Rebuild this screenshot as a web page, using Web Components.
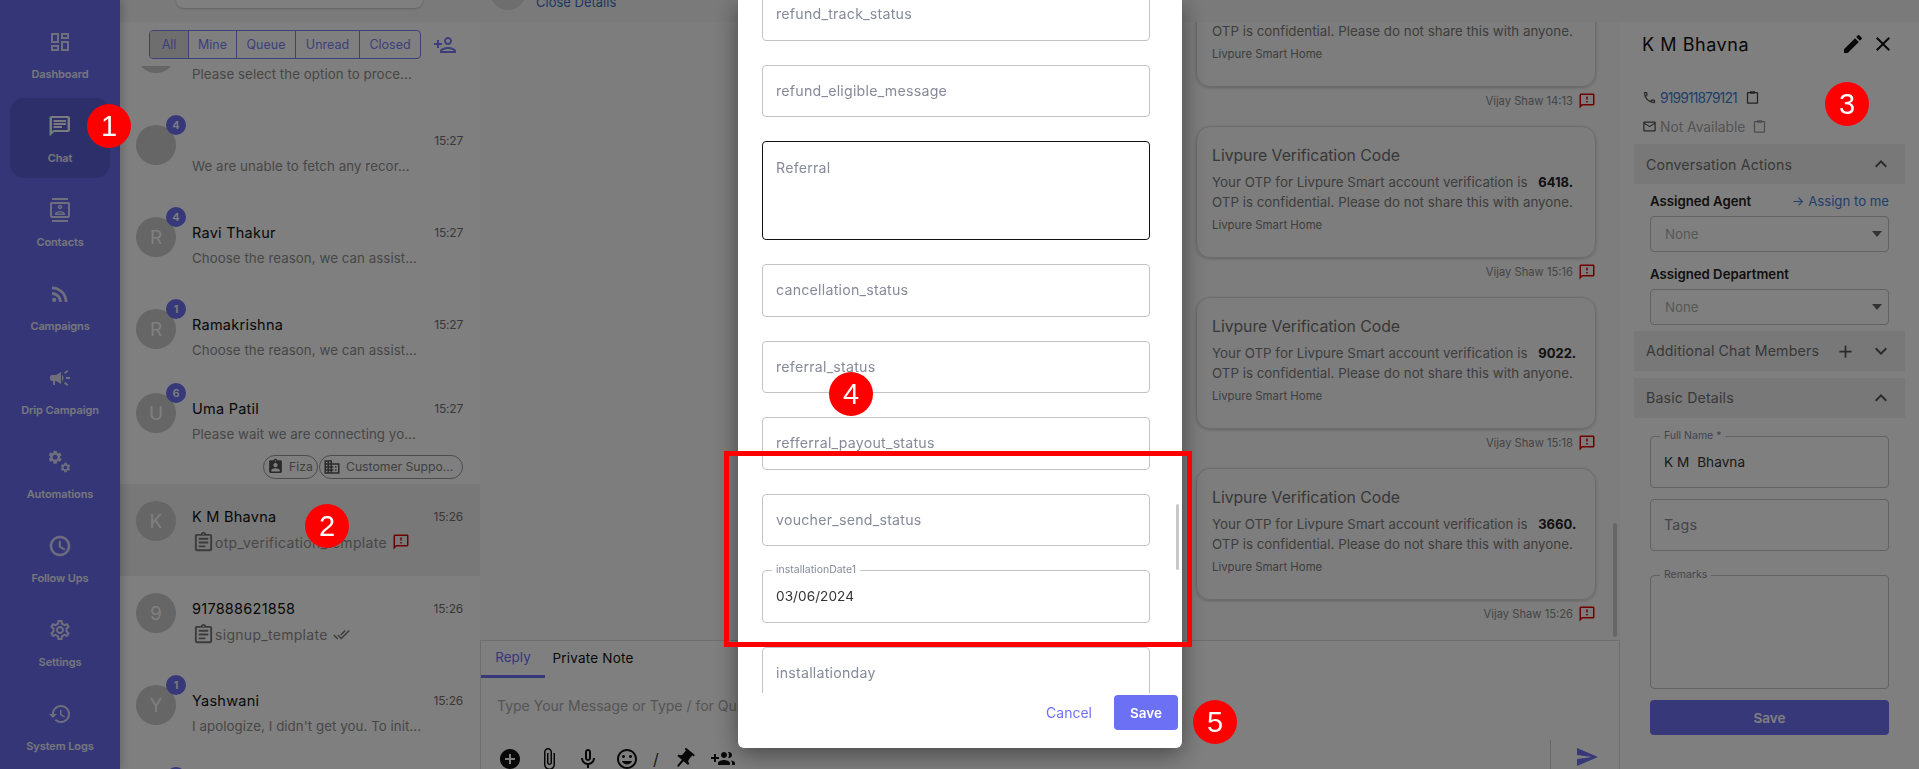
<!DOCTYPE html>
<html lang="en">
<head>
<meta charset="utf-8">
<title>Chat</title>
<style>
    html, body { margin: 0; height: 100%; overflow: hidden; background: #fff; }
    body { font-family: "Inter", "Noto Sans", sans-serif; color: #111; }
</style>
</head>
<body>
<app-shell>
    <side-nav slot="nav">
        <nav-item icon="dashboard">Dashboard</nav-item>
        <nav-item icon="chat" active>Chat</nav-item>
        <nav-item icon="contacts">Contacts</nav-item>
        <nav-item icon="rss">Campaigns</nav-item>
        <nav-item icon="campaign">Drip Campaign</nav-item>
        <nav-item icon="gears">Automations</nav-item>
        <nav-item icon="clock">Follow Ups</nav-item>
        <nav-item icon="settings">Settings</nav-item>
        <nav-item icon="history">System Logs</nav-item>
    </side-nav>

    <chat-list slot="list">
        <chat-row sub="Please select the option to proce..."></chat-row>
        <chat-row badge="4" time="15:27" sub="We are unable to fetch any recor..."></chat-row>
        <chat-row letter="R" badge="4" name="Ravi Thakur" time="15:27" sub="Choose the reason, we can assist..."></chat-row>
        <chat-row letter="R" badge="1" name="Ramakrishna" time="15:27" sub="Choose the reason, we can assist..." short></chat-row>
        <chat-row letter="U" badge="6" name="Uma Patil" time="15:27" sub="Please wait we are connecting yo..." chips></chat-row>
        <chat-row letter="K" name="K M Bhavna" time="15:26" sub="otp_verification_template" template="failed" selected></chat-row>
        <chat-row letter="9" name="917888621858" time="15:26" sub="signup_template" template="read"></chat-row>
        <chat-row letter="Y" badge="1" name="Yashwani" time="15:26" sub="I apologize, I didn't get you. To init..."></chat-row>
        <chat-row badge="2"></chat-row>
    </chat-list>

    <chat-thread slot="thread">
        <otp-card code="1204" meta="Vijay Shaw 14:13"></otp-card>
        <otp-card code="6418" meta="Vijay Shaw 15:16"></otp-card>
        <otp-card code="9022" meta="Vijay Shaw 15:18"></otp-card>
        <otp-card code="3660" meta="Vijay Shaw 15:26"></otp-card>
    </chat-thread>

    <contact-panel slot="panel"></contact-panel>
</app-shell>

<field-modal>
    <form-field placeholder="refund_track_status"></form-field>
    <form-field placeholder="refund_eligible_message"></form-field>
    <form-field placeholder="Referral" area></form-field>
    <form-field placeholder="cancellation_status"></form-field>
    <form-field placeholder="referral_status"></form-field>
    <form-field placeholder="refferral_payout_status"></form-field>
    <form-field placeholder="voucher_send_status"></form-field>
    <form-field label="installationDate1" value="03/06/2024"></form-field>
    <form-field placeholder="installationday"></form-field>
</field-modal>

<red-box></red-box>
<call-out n="1" style="--x:109px;--y:126px"></call-out>
<call-out n="2" style="--x:327px;--y:526px"></call-out>
<call-out n="3" style="--x:1847px;--y:104px"></call-out>
<call-out n="4" style="--x:851px;--y:394px"></call-out>
<call-out n="5" style="--x:1215px;--y:722px"></call-out>

<script>
const ICONS = {
    dashboard: 'M19 5v2h-4V5h4M9 5v6H5V5h4m10 8v6h-4v-6h4M9 17v2H5v-2h4M21 3h-8v6h8V3zM11 3H3v10h8V3zm10 8h-8v10h8V11zm-10 4H3v6h8v-6z',
    chat: 'M20 2H4c-1.1 0-2 .9-2 2v18l4-4h14c1.1 0 2-.9 2-2V4c0-1.1-.9-2-2-2zm0 14H6l-2 2V4h16v12zM6 12h8v2H6zM6 9h12v2H6zM6 6h12v2H6z',
    contacts: 'M20 0H4v2h16V0zM4 24h16v-2H4v2zM20 4H4c-1.1 0-2 .9-2 2v12c0 1.1.9 2 2 2h16c1.1 0 2-.9 2-2V6c0-1.1-.9-2-2-2zm0 14H4V6h16v12zm-8-6.75c1.24 0 2.25-1.01 2.25-2.25S13.24 6.75 12 6.75 9.75 7.76 9.75 9s1.01 2.25 2.25 2.25zm0-3c.41 0 .75.34.75.75s-.34.75-.75.75-.75-.34-.75-.75.34-.75.75-.75zM17 15.99C17 13.9 13.69 13 12 13s-5 .9-5 2.99V17h10v-1.01zm-8.19-.49c.61-.52 2.03-1 3.19-1 1.17 0 2.59.48 3.2 1H8.81z',
    rss: 'M4 4.44v2.83c7.03 0 12.73 5.7 12.73 12.73h2.83c0-8.59-6.97-15.56-15.56-15.56zm0 5.66v2.83c3.9 0 7.07 3.17 7.07 7.07h2.83c0-5.47-4.43-9.9-9.9-9.9zM6.18 15.64a2.18 2.18 0 1 0 0 4.36 2.18 2.18 0 0 0 0-4.36z',
    campaign: 'M18 11v2h4v-2h-4zm-2 6.61c.96.71 2.21 1.65 3.2 2.39.4-.53.8-1.07 1.2-1.6-.99-.74-2.24-1.68-3.2-2.4-.4.54-.8 1.08-1.2 1.61zM20.4 5.6c-.4-.53-.8-1.07-1.2-1.6-.99.74-2.24 1.68-3.2 2.4.4.53.8 1.07 1.2 1.6.96-.72 2.21-1.65 3.2-2.4zM4 9c-1.1 0-2 .9-2 2v2c0 1.1.9 2 2 2h1v4h2v-4h1l5 3V6L8 9H4zm11.5 3c0-1.33-.58-2.53-1.5-3.35v6.69c.92-.81 1.5-2.01 1.5-3.34z',
    settings: 'M19.43 12.98c.04-.32.07-.64.07-.98 0-.34-.03-.66-.07-.98l2.11-1.65c.19-.15.24-.42.12-.64l-2-3.46c-.09-.16-.26-.25-.44-.25-.06 0-.12.01-.17.03l-2.49 1c-.52-.4-1.08-.73-1.69-.98l-.38-2.65C14.46 2.18 14.25 2 14 2h-4c-.25 0-.46.18-.49.42l-.38 2.65c-.61.25-1.17.59-1.69.98l-2.49-1c-.06-.02-.12-.03-.18-.03-.17 0-.34.09-.43.25l-2 3.46c-.13.22-.07.49.12.64l2.11 1.65c-.04.32-.07.65-.07.98 0 .33.03.66.07.98l-2.11 1.65c-.19.15-.24.42-.12.64l2 3.46c.09.16.26.25.44.25.06 0 .12-.01.17-.03l2.49-1c.52.4 1.08.73 1.69.98l.38 2.65c.03.24.24.42.49.42h4c.25 0 .46-.18.49-.42l.38-2.65c.61-.25 1.17-.59 1.69-.98l2.49 1c.06.02.12.03.18.03.17 0 .34-.09.43-.25l2-3.46c.12-.22.07-.49-.12-.64l-2.11-1.65zm-1.98-1.71c.04.31.05.52.05.73 0 .21-.02.43-.05.73l-.14 1.13.89.7 1.08.84-.7 1.21-1.27-.51-1.04-.42-.9.68c-.43.32-.84.56-1.25.73l-1.06.43-.16 1.13-.2 1.35h-1.4l-.19-1.35-.16-1.13-1.06-.43c-.43-.18-.83-.41-1.23-.71l-.91-.7-1.06.43-1.27.51-.7-1.21 1.08-.84.89-.7-.14-1.13c-.03-.31-.05-.54-.05-.74s.02-.43.05-.73l.14-1.13-.89-.7-1.08-.84.7-1.21 1.27.51 1.04.42.9-.68c.43-.32.84-.56 1.25-.73l1.06-.43.16-1.13.2-1.35h1.39l.19 1.35.16 1.13 1.06.43c.43.18.83.41 1.23.71l.91.7 1.06-.43 1.27-.51.7 1.21-1.07.85-.89.7.14 1.13zM12 8c-2.21 0-4 1.79-4 4s1.79 4 4 4 4-1.79 4-4-1.79-4-4-4zm0 6c-1.1 0-2-.9-2-2s.9-2 2-2 2 .9 2 2-.9 2-2 2z',
    clock: 'M11.99 2C6.47 2 2 6.48 2 12s4.47 10 9.99 10C17.52 22 22 17.52 22 12S17.52 2 11.99 2zM12 20c-4.42 0-8-3.58-8-8s3.58-8 8-8 8 3.58 8 8-3.58 8-8 8zm.5-13H11v6l5.25 3.15.75-1.23-4.5-2.67z',
    history: 'M13 3c-4.97 0-9 4.03-9 9H1l3.89 3.89.07.14L9 12H6c0-3.87 3.13-7 7-7s7 3.13 7 7-3.13 7-7 7c-1.93 0-3.68-.79-4.94-2.06l-1.42 1.42C8.27 19.99 10.51 21 13 21c4.97 0 9-4.03 9-9s-4.03-9-9-9zm-1 5v5l4.28 2.54.72-1.21-3.5-2.08V8H12z',
    personAdd: 'M15 12c2.21 0 4-1.79 4-4s-1.79-4-4-4-4 1.79-4 4 1.79 4 4 4zm0-6c1.1 0 2 .9 2 2s-.9 2-2 2-2-.9-2-2 .9-2 2-2zm0 8c-2.67 0-8 1.34-8 4v2h16v-2c0-2.66-5.33-4-8-4zm-6 4c.22-.72 3.31-2 6-2 2.7 0 5.8 1.29 6 2H9zm-3-3v-3h3v-2H6V7H4v3H1v2h3v3h2z',
    assignment: 'M7 15h7v2H7zm0-4h10v2H7zm0-4h10v2H7zm12-4h-4.18C14.4 1.84 13.3 1 12 1c-1.3 0-2.4.84-2.82 2H5c-.14 0-.27.01-.4.04-.39.08-.74.28-1.01.55-.18.18-.33.4-.43.64-.1.23-.16.49-.16.77v14c0 .27.06.54.16.78s.25.45.43.64c.27.27.62.47 1.01.55.13.02.26.03.4.03h14c1.1 0 2-.9 2-2V5c0-1.1-.9-2-2-2zm-7-.25c.41 0 .75.34.75.75s-.34.75-.75.75-.75-.34-.75-.75.34-.75.75-.75zM19 19H5V5h14v14z',
    failed: 'M20 2H4c-1.1 0-1.99.9-1.99 2L2 22l4-4h14c1.1 0 2-.9 2-2V4c0-1.1-.9-2-2-2zm0 14H5.17L4 17.17V4h16v12zm-9-4h2v2h-2zm0-6h2v4h-2z',
    doneAll: 'M18 7l-1.41-1.41-6.34 6.34 1.41 1.41L18 7zm4.24-1.41L11.66 16.17 7.48 12l-1.41 1.41L11.66 19l12-12-1.42-1.41zM.41 13.41L6 19l1.41-1.41L1.83 12 .41 13.41z',
    agent: 'M19 3h-4.18C14.4 1.84 13.3 1 12 1c-1.3 0-2.4.84-2.82 2H5c-1.1 0-2 .9-2 2v14c0 1.1.9 2 2 2h14c1.1 0 2-.9 2-2V5c0-1.1-.9-2-2-2zm-7 0c.55 0 1 .45 1 1s-.45 1-1 1-1-.45-1-1 .45-1 1-1zm0 4c1.66 0 3 1.34 3 3s-1.34 3-3 3-3-1.34-3-3 1.34-3 3-3zm6 12H6v-1.4c0-2 4-3.1 6-3.1s6 1.1 6 3.1V19z',
    domain: 'M12 7V3H2v18h20V7H12zM6 19H4v-2h2v2zm0-4H4v-2h2v2zm0-4H4V9h2v2zm0-4H4V5h2v2zm4 12H8v-2h2v2zm0-4H8v-2h2v2zm0-4H8V9h2v2zm0-4H8V5h2v2zm10 12h-8v-2h2v-2h-2v-2h2v-2h-2V9h8v10zm-2-8h-2v2h2v-2zm0 4h-2v2h2v-2z',
    edit: 'M3 17.25V21h3.75L17.81 9.94l-3.75-3.75L3 17.25zM20.71 7.04c.39-.39.39-1.02 0-1.41l-2.34-2.34c-.39-.39-1.02-.39-1.41 0l-1.83 1.83 3.75 3.75 1.83-1.83z',
    close: 'M19 6.41L17.59 5 12 10.59 6.41 5 5 6.41 10.59 12 5 17.59 6.41 19 12 13.41 17.59 19 19 17.59 13.41 12z',
    phone: 'M6.54 5c.06.89.21 1.76.45 2.59l-1.2 1.2c-.41-1.2-.67-2.47-.76-3.79h1.51m9.86 12.02c.85.24 1.72.39 2.6.45v1.49c-1.32-.09-2.59-.35-3.8-.75l1.2-1.19M7.5 3H4c-.55 0-1 .45-1 1 0 9.39 7.61 17 17 17 .55 0 1-.45 1-1v-3.49c0-.55-.45-1-1-1-1.24 0-2.45-.2-3.57-.57-.1-.04-.21-.05-.31-.05-.26 0-.51.1-.71.29l-2.2 2.2c-2.83-1.45-5.15-3.76-6.59-6.59l2.2-2.2c.28-.28.36-.67.25-1.02C8.7 6.45 8.5 5.25 8.5 4c0-.55-.45-1-1-1z',
    mail: 'M20 4H4c-1.1 0-1.99.9-1.99 2L2 18c0 1.1.9 2 2 2h16c1.1 0 2-.9 2-2V6c0-1.1-.9-2-2-2zm0 14H4V8l8 5 8-5v10zm-8-7L4 6h16l-8 5z',
    paste: 'M19 3h-3V2H8v1H5c-1.1 0-2 .9-2 2v15c0 1.1.9 2 2 2h14c1.1 0 2-.9 2-2V5c0-1.1-.9-2-2-2zM5 5h3v1h8V5h3v15H5z',
    less: 'M12 8l-6 6 1.41 1.41L12 10.83l4.59 4.58L18 14z',
    more: 'M16.59 8.59L12 13.17 7.41 8.59 6 10l6 6 6-6z',
    add: 'M19 13h-6v6h-2v-6H5v-2h6V5h2v6h6v2z',
    addCircle: 'M12 2C6.48 2 2 6.48 2 12s4.48 10 10 10 10-4.48 10-10S17.52 2 12 2zm5 11h-4v4h-2v-4H7v-2h4V7h2v4h4v2z',
    attach: 'M16.5 6v11.5c0 2.21-1.79 4-4 4s-4-1.79-4-4V5c0-1.38 1.12-2.5 2.5-2.5s2.5 1.12 2.5 2.5v10.5c0 .55-.45 1-1 1s-1-.45-1-1V6H10v9.5c0 1.38 1.12 2.5 2.5 2.5s2.5-1.12 2.5-2.5V5c0-2.21-1.79-4-4-4S7 2.79 7 5v12.5c0 3.04 2.46 5.5 5.5 5.5s5.5-2.46 5.5-5.5V6h-1.5z',
    mic: 'M12 14c1.66 0 3-1.34 3-3V5c0-1.66-1.34-3-3-3S9 3.34 9 5v6c0 1.66 1.34 3 3 3zm-1-9c0-.55.45-1 1-1s1 .45 1 1v6c0 .55-.45 1-1 1s-1-.45-1-1V5zm6 6c0 2.76-2.24 5-5 5s-5-2.24-5-5H5c0 3.53 2.61 6.43 6 6.92V21h2v-3.08c3.39-.49 6-3.39 6-6.92h-2z',
    smile: 'M11.99 2C6.47 2 2 6.48 2 12s4.47 10 9.99 10C17.52 22 22 17.52 22 12S17.52 2 11.99 2zM12 20c-4.42 0-8-3.58-8-8s3.58-8 8-8 8 3.58 8 8-3.58 8-8 8zm3.5-9c.83 0 1.5-.67 1.5-1.5S16.33 8 15.5 8 14 8.67 14 9.5s.67 1.5 1.5 1.5zm-7 0c.83 0 1.5-.67 1.5-1.5S9.33 8 8.5 8 7 8.67 7 9.5 7.67 11 8.5 11zm3.5 6.5c2.33 0 4.31-1.46 5.11-3.5H6.89c.8 2.04 2.78 3.5 5.11 3.5z',
    pin: 'M16 9V4h1c.55 0 1-.45 1-1s-.45-1-1-1H7c-.55 0-1 .45-1 1s.45 1 1 1h1v5c0 1.66-1.34 3-3 3v2h5.97v7l1 1 1-1v-7H19v-2c-1.66 0-3-1.34-3-3z',
    groupAdd: 'M8 10H5V7H3v3H0v2h3v3h2v-3h3v-2zm10 1c1.66 0 2.99-1.34 2.99-3S19.66 5 18 5c-.32 0-.63.05-.91.14.57.81.9 1.79.9 2.86s-.34 2.04-.9 2.86c.28.09.59.14.91.14zm-5 0c1.66 0 2.99-1.34 2.99-3S14.66 5 13 5s-3 1.34-3 3 1.34 3 3 3zm6.62 2.16c.83.73 1.38 1.66 1.38 2.84v2h3v-2c0-1.54-2.37-2.49-4.38-2.84zM13 13c-2 0-6 1-6 3v2h12v-2c0-2-4-3-6-3z',
    send: 'M2.01 21L23 12 2.01 3 2 10l15 2-15 2z'
};

class AppIcon extends HTMLElement {
    connectedCallback() {
        const size = this.getAttribute('size') || 24;
        const shadowRoot = this.attachShadow({mode: 'open'});
        shadowRoot.innerHTML = `
            <style>
                :host { display: inline-flex; flex: none; width: ${size}px; height: ${size}px; }
                svg { width: 100%; height: 100%; fill: currentColor; display: block; }
            </style>
            <svg viewBox="0 0 24 24"><path d="${ICONS[this.getAttribute('name')]}"/></svg>
        `;
    }
}

class GearsIcon extends HTMLElement {
    // two gears, big one top left and small one bottom right
    constructor() {
        super();
        const shadowRoot = this.attachShadow({mode: 'open'});
        const gear = 'M19.14 12.94c.04-.3.06-.61.06-.94 0-.32-.02-.64-.07-.94l2.03-1.58c.18-.14.23-.41.12-.61l-1.92-3.32c-.12-.22-.37-.29-.59-.22l-2.39.96c-.5-.38-1.03-.7-1.62-.94l-.36-2.54c-.04-.24-.24-.41-.48-.41h-3.84c-.24 0-.43.17-.47.41l-.36 2.54c-.59.24-1.13.57-1.62.94l-2.39-.96c-.22-.08-.47 0-.59.22L2.74 8.87c-.12.21-.08.47.12.61l2.03 1.58c-.05.3-.09.63-.09.94s.02.64.07.94l-2.03 1.58c-.18.14-.23.41-.12.61l1.92 3.32c.12.22.37.29.59.22l2.39-.96c.5.38 1.03.7 1.62.94l.36 2.54c.05.24.24.41.48.41h3.84c.24 0 .44-.17.47-.41l.36-2.54c.59-.24 1.13-.56 1.62-.94l2.39.96c.22.08.47 0 .59-.22l1.92-3.32c.12-.22.07-.47-.12-.61l-2.01-1.58zM12 15.6c-1.98 0-3.6-1.62-3.6-3.6s1.62-3.6 3.6-3.6 3.6 1.62 3.6 3.6-1.62 3.6-3.6 3.6z';
        shadowRoot.innerHTML = `
            <style>
                :host { display: inline-flex; width: 24px; height: 24px; }
                svg { width: 100%; height: 100%; fill: currentColor; display: block; }
            </style>
            <svg viewBox="0 0 24 24">
                <path transform="translate(-1 -1) scale(.68)" d="${gear}"/>
                <path transform="translate(11.5 11.5) scale(.5)" d="${gear}"/>
            </svg>
        `;
    }
}

class AppShell extends HTMLElement {
    constructor() {
        super();
        const shadowRoot = this.attachShadow({mode: 'open'});
        shadowRoot.innerHTML = `
            <style>
                :host {
                    display: grid;
                    grid-template-columns: 120px 360px 1140px 299px;
                    grid-template-rows: 22px 747px;
                    width: 1919px;
                    height: 769px;
                    overflow: hidden;
                }
                .nav { grid-row: 1 / 3; position: relative; z-index: 2; }
                .topbar { grid-column: 2 / 5; display: flex; align-items: flex-end; background: #f4f4f4; overflow: hidden; }
                .search { width: 247px; height: 30px; flex: none; margin: 0 57px 14px 56px; background: #fff; border-radius: 0 0 8px 8px; box-shadow: 0 1px 2px rgba(0,0,0,.2); }
                .who { width: 36px; height: 36px; flex: none; margin: 0 10px 12px 10px; background: #ddd; border-radius: 50%; }
                .close { font-size: 13px; color: #3b6fc4; margin-bottom: 12px; line-height: 16px; }
                ::slotted([slot="thread"]) { min-width: 0; }
            </style>
            <div class="nav"><slot name="nav"></slot></div>
            <div class="topbar">
                <div class="search"></div>
                <div class="who"></div>
                <div class="close">Close Details</div>
            </div>
            <slot name="list"></slot>
            <slot name="thread"></slot>
            <slot name="panel"></slot>
        `;
    }
}

class SideNav extends HTMLElement {
    constructor() {
        super();
        const shadowRoot = this.attachShadow({mode: 'open'});
        shadowRoot.innerHTML = `
            <style>
                :host {
                    display: flex;
                    flex-direction: column;
                    gap: 4px;
                    height: 100%;
                    box-sizing: border-box;
                    padding: 14px 10px 0;
                    background: #686cf0;
                    box-shadow: 3px 0 8px rgba(0,0,0,.18);
                }
            </style>
            <slot></slot>
        `;
    }
}

class NavItem extends HTMLElement {
    constructor() {
        super();
        const shadowRoot = this.attachShadow({mode: 'open'});
        const icon = this.getAttribute('icon');
        shadowRoot.innerHTML = `
            <style>
                :host {
                    display: flex;
                    flex-direction: column;
                    align-items: center;
                    height: 80px;
                    padding-top: 16px;
                    box-sizing: border-box;
                    border-radius: 14px;
                    color: #eeeef8;
                    font-size: 11px;
                    font-weight: 600;
                    letter-spacing: -.1px;
                }
                :host([active]) { background: #5a5ed6; }
                :host([active]) app-icon { filter: drop-shadow(-1px 0 0 #5fd0c0); color: #f4f4ff; }
                app-icon, gears-icon { color: #dcdcfa; }
                :host([icon="clock"]) app-icon { stroke: #dcdcfa; stroke-width: .6; }
                .label { margin-top: 12px; line-height: 16px; white-space: nowrap; }
            </style>
            ${icon === 'gears' ? '<gears-icon></gears-icon>' : `<app-icon name="${icon}"></app-icon>`}
            <div class="label"><slot></slot></div>
        `;
    }
}

class ChatList extends HTMLElement {
    constructor() {
        super();
        const shadowRoot = this.attachShadow({mode: 'open'});
        const tabs = ['All', 'Mine', 'Queue', 'Unread', 'Closed'];
        const widths = [39, 48, 59, 64, 60];
        shadowRoot.innerHTML = `
            <style>
                :host {
                    display: flex;
                    flex-direction: column;
                    min-height: 0;
                    border-right: 1px solid #ddd;
                    box-sizing: content-box;
                    width: 360px;
                    margin-right: -1px;
                }
                .filters { display: flex; align-items: center; height: 29px; margin: 8px 0 7px 29px; flex: none; }
                .tabs { display: flex; height: 29px; box-sizing: border-box; border: 1px solid #7c80f0; border-radius: 4px; overflow: hidden; }
                .tab { display: flex; align-items: center; justify-content: center; box-sizing: border-box; font-size: 12.5px; color: #7a7ef8; border-right: 1px solid #7c80f0; }
                .tab:last-child { border-right: 0; }
                .tab.on { background: #dcdcdc; }
                app-icon { color: #7a7ef8; margin-left: 12px; }
                .rows { flex: 1; min-height: 0; overflow: hidden; }
                .inner { margin-top: -50px; }
            </style>
            <div class="filters">
                <div class="tabs">
                    ${tabs.map((t, i) => `<div class="tab ${i === 0 ? 'on' : ''}" style="width:${widths[i]}px">${t}</div>`).join('')}
                </div>
                <app-icon name="personAdd"></app-icon>
            </div>
            <div class="rows"><div class="inner"><slot></slot></div></div>
        `;
    }
}

class ChatRow extends HTMLElement {
    constructor() {
        super();
        const shadowRoot = this.attachShadow({mode: 'open'});
        const attr = (name) => this.getAttribute(name) || '';
        const template = attr('template');
        let subLine = `<span class="sub-text">${attr('sub')}</span>`;
        if (template) {
            subLine = `
                <app-icon class="doc" name="assignment" size="23"></app-icon>
                <span class="tpl-text">${attr('sub')}</span>
                ${template === 'failed'
                    ? '<app-icon class="fail" name="failed" size="18"></app-icon>'
                    : '<app-icon class="read" name="doneAll" size="17"></app-icon>'}
            `;
        }
        shadowRoot.innerHTML = `
            <style>
                :host {
                    display: grid;
                    grid-template-columns: 40px 1fr;
                    column-gap: 16px;
                    height: 92px;
                    box-sizing: border-box;
                    padding: 17px 17px 0 16px;
                }
                :host([short]) { height: 84px; }
                :host([chips]) { height: 108px; }
                :host([selected]) { background: #f0f0f0; }
                .avatar {
                    position: relative;
                    width: 40px;
                    height: 40px;
                    border-radius: 50%;
                    background: #cccccc;
                    color: #fff;
                    font-size: 19px;
                    display: flex;
                    align-items: center;
                    justify-content: center;
                }
                .badge {
                    position: absolute;
                    top: -10px;
                    right: -10px;
                    width: 20px;
                    height: 20px;
                    border-radius: 50%;
                    background: #6c70f5;
                    color: #fff;
                    font-size: 11px;
                    font-weight: 600;
                    display: flex;
                    align-items: center;
                    justify-content: center;
                }
                .top { display: flex; justify-content: space-between; margin-top: 4px; height: 24px; line-height: 24px; }
                .name { font-size: 14.5px; font-weight: 400; color: #111; letter-spacing: .25px; }
                .time { font-size: 12px; color: #707070; letter-spacing: -.2px; }
                .sub { display: flex; align-items: center; height: 26px; font-size: 13.3px; color: #8e8e8e; white-space: nowrap; letter-spacing: .06px; }
                .tpl-text { font-size: 14px; margin-left: -1px; letter-spacing: .3px; }
                .doc { color: #777; margin-right: 1px; }
                .fail { color: #e00000; margin-left: 5px; }
                .read { color: #777; margin-left: 5px; }
                .chips { grid-column: 1 / 3; display: flex; justify-content: flex-end; margin-top: 2px; }
                .chip {
                    display: flex;
                    align-items: center;
                    height: 24px;
                    box-sizing: border-box;
                    border: 1px solid #999;
                    border-radius: 12px;
                    font-size: 12.2px;
                    color: #808080;
                    gap: 5px;
                    padding: 0 4px 0 3px;
                    margin-left: 1px;
                    white-space: nowrap;
                }
                .chip app-icon { color: #555; }
            </style>
            <div class="avatar">${attr('letter')}${attr('badge') ? `<div class="badge">${attr('badge')}</div>` : ''}</div>
            <div>
                <div class="top"><span class="name">${attr('name')}</span><span class="time">${attr('time')}</span></div>
                <div class="sub">${subLine}</div>
            </div>
            ${this.hasAttribute('chips') ? `
                <div class="chips">
                    <div class="chip" style="width:55px"><app-icon name="agent" size="17"></app-icon>Fiza</div>
                    <div class="chip" style="width:144px"><app-icon name="domain" size="18"></app-icon>Customer Suppo...</div>
                </div>` : ''}
        `;
    }
}

class ChatThread extends HTMLElement {
    constructor() {
        super();
        const shadowRoot = this.attachShadow({mode: 'open'});
        const tools = ['addCircle', 'attach', 'mic', 'smile'];
        shadowRoot.innerHTML = `
            <style>
                :host { display: flex; flex-direction: column; min-height: 0; background: #fafafa; position: relative; }
                .messages { height: 618px; flex: none; overflow: hidden; }
                .inner { margin-top: -67px; display: flex; flex-direction: column; align-items: flex-end; padding-right: 24px; }
                .bar { position: absolute; right: 3px; top: 501px; width: 4px; height: 114px; background: #ccc; border-radius: 2px; }
                .reply { flex: 1; border-top: 1px solid #ddd; border-right: 1px solid #ddd; border-left: 1px solid #ddd; background: #fff; display: flex; flex-direction: column; }
                .tabs { display: flex; height: 37px; font-size: 13.5px; font-weight: 400; flex: none; white-space: nowrap; }
                .tabs div { display: flex; align-items: center; justify-content: center; box-sizing: border-box; height: 37px; padding-bottom: 3px; }
                .tab-on { width: 64px; color: #6c70f5; border-bottom: 3px solid #6c70f5; }
                .tab-off { margin-left: 8px; width: 80px; color: #111; letter-spacing: .2px; }
                .hint { margin: 17px 0 0 16px; height: 22px; line-height: 22px; font-size: 14px; color: #aaa; }
                .tools { display: flex; align-items: center; margin-top: 28px; height: 28px; padding-left: 17px; color: #111; }
                .tools app-icon { margin-right: 15px; }
                .tools .slash { font-size: 16px; color: #333; width: 15px; margin-right: 4px; margin-left: -1px; }
                .pin { transform: rotate(40deg); }
                .right { margin: -5px 0 0 auto; display: flex; align-items: center; height: 33px; border-left: 1px solid #ccc; width: 69px; padding-left: 24px; box-sizing: border-box; }
                .right app-icon { color: #6c70f5; margin: 0; }
            </style>
            <div class="messages"><div class="inner"><slot></slot></div></div>
            <div class="bar"></div>
            <div class="reply">
                <div class="tabs"><div class="tab-on">Reply</div><div class="tab-off">Private Note</div></div>
                <div class="hint">Type Your Message or Type / for Quick Replies</div>
                <div class="tools">
                    ${tools.map(n => `<app-icon name="${n}"></app-icon>`).join('')}
                    <span class="slash">/</span>
                    <app-icon class="pin" name="pin"></app-icon>
                    <app-icon name="groupAdd"></app-icon>
                    <div class="right"><app-icon name="send"></app-icon></div>
                </div>
            </div>
        `;
    }
}

class OtpCard extends HTMLElement {
    constructor() {
        super();
        const shadowRoot = this.attachShadow({mode: 'open'});
        shadowRoot.innerHTML = `
            <style>
                :host { display: block; width: 400px; height: 171px; flex: none; color: #7c7c7c; }
                .card { height: 132px; box-sizing: border-box; padding: 17px 15px 0; border: 1px solid #d8d8d8; border-radius: 14px; box-shadow: 0 1px 3px rgba(0,0,0,.2); }
                .title { font-size: 15.8px; line-height: 24px; color: #707070; letter-spacing: -.05px; }
                .body { font-size: 13.3px; line-height: 19.5px; margin-top: 5px; white-space: nowrap; letter-spacing: .02px; }
                b { color: #222; font-weight: 700; margin-left: 7px; font-size: 13px; }
                .foot { font-size: 11.4px; line-height: 16px; margin-top: 5px; color: #7c7c7c; }
                .meta { display: flex; justify-content: flex-end; align-items: center; height: 24px; margin-top: 2px; font-size: 11.2px; color: #8a8a8a; gap: 5px; padding-right: 0; }
                app-icon { color: #e00000; }
            </style>
            <div class="card">
                <div class="title">Livpure Verification Code</div>
                <div class="body">Your OTP for Livpure Smart account verification is <b>${this.getAttribute('code')}.</b><br>OTP is confidential. Please do not share this with anyone.</div>
                <div class="foot">Livpure Smart Home</div>
            </div>
            <div class="meta">${this.getAttribute('meta')}<app-icon name="failed" size="18"></app-icon></div>
        `;
    }
}

class ContactPanel extends HTMLElement {
    constructor() {
        super();
        const shadowRoot = this.attachShadow({mode: 'open'});
        shadowRoot.innerHTML = `
            <style>
                :host { display: block; background: #fff; min-height: 0; }
                .title { display: flex; align-items: center; height: 44px; padding: 0 24px 0 22px; }
                .title span { flex: 1; font-size: 18px; font-weight: 400; color: #111; letter-spacing: .55px; }
                .title app-icon { margin-left: 6px; }
                .contact { display: flex; align-items: center; height: 29px; padding-left: 22px; font-size: 13.8px; gap: 3px; color: #a8a8a8; }
                .first { margin-top: 17px; color: #3d7fd6; letter-spacing: -.85px; }
                .contact app-icon.kind { color: #555; }
                .contact app-icon.copy { color: #444; margin-left: 5px; }
                .second app-icon.copy { color: #999; margin-left: 4px; }
                .head { display: flex; align-items: center; height: 40px; margin: 6px 14px 0; padding: 0 12px; background: #f0f0f0; font-size: 14.2px; color: #707070; letter-spacing: .15px; }
                .head span { flex: 1; white-space: nowrap; padding-bottom: 1px; }
                .head app-icon { color: #555; }
                .head .plus { margin-right: 13px; }
                .first-head { margin-top: 3px; }
                .first-head span { padding: 0; }
                .basic-head { margin-top: 7px; }
                .body { padding: 0 30px; }
                .row { display: flex; justify-content: space-between; align-items: center; height: 24px; margin-top: 5px; font-size: 13.2px; font-weight: 600; color: #222; white-space: nowrap; }
                .row a { font-weight: 400; color: #3d7fd6; font-size: 13.2px; }
                .select { position: relative; display: flex; align-items: center; height: 36px; box-sizing: border-box; margin-top: 3px; padding-left: 14px; border: 1px solid #c4c4c4; border-radius: 4px; font-size: 13.3px; color: #b0b0b0; }
                .select::after { content: ''; position: absolute; right: 6px; top: 14px; border: 5px solid transparent; border-top: 6px solid #666; border-bottom: 0; }
                .mt9 { margin-top: 10px; }
                .save { display: flex; align-items: center; justify-content: center; height: 35px; margin-top: 11px; border-radius: 4px; background: #6c70f5; color: #fff; font-size: 13.5px; font-weight: 600; }
            </style>
            <div class="title">
                <span>K M Bhavna</span>
                <app-icon name="edit"></app-icon>
                <app-icon name="close"></app-icon>
            </div>
            <div class="contact first"><app-icon class="kind" name="phone" size="15"></app-icon>919911879121<app-icon class="copy" name="paste" size="15"></app-icon></div>
            <div class="contact second"><app-icon class="kind" name="mail" size="15"></app-icon>Not Available<app-icon class="copy" name="paste" size="15"></app-icon></div>
            <div class="head first-head"><span>Conversation Actions</span><app-icon name="less"></app-icon></div>
            <div class="body">
                <div class="row">Assigned Agent<a>→ Assign to me</a></div>
                <div class="select">None</div>
                <div class="row mt9">Assigned Department</div>
                <div class="select">None</div>
            </div>
            <div class="head"><span>Additional Chat Members</span><app-icon class="plus" name="add" size="21"></app-icon><app-icon name="more"></app-icon></div>
            <div class="head basic-head"><span>Basic Details</span><app-icon name="less"></app-icon></div>
            <div class="body">
                <form-field style="margin-top:18px;--field-height:52px" label="Full Name *" value="K M  Bhavna"></form-field>
                <form-field style="margin-top:11px;--field-height:52px" placeholder="Tags"></form-field>
                <form-field style="margin-top:24px;--field-height:114px" label="Remarks" area></form-field>
                <div class="save">Save</div>
            </div>
        `;
    }
}

class FormField extends HTMLElement {
    constructor() {
        super();
        const shadowRoot = this.attachShadow({mode: 'open'});
        const label = this.getAttribute('label');
        const text = this.getAttribute('value') || this.getAttribute('placeholder') || '';
        const isValue = this.hasAttribute('value');
        shadowRoot.innerHTML = `
            <style>
                :host {
                    position: relative;
                    height: var(--field-height, 52.5px);
                    box-sizing: border-box;
                    border: 1px solid #c4c4c4;
                    border-radius: 4px;
                    background: #fff;
                    padding: 0 13px;
                    display: flex;
                    align-items: center;
                    font-size: 14.2px;
                    letter-spacing: .23px;
                }
                :host([area]) { align-items: flex-start; padding-top: 16px; }
                .text { color: #868a99; white-space: pre; line-height: 20px; }
                .text.value { color: #333; font-size: 13.6px; letter-spacing: .05px; }
                .label {
                    position: absolute;
                    top: -7px;
                    left: 9px;
                    padding: 0 4px;
                    background: #fff;
                    font-size: 10.5px;
                    line-height: 12px;
                    color: #868a99;
                    white-space: nowrap;
                    letter-spacing: 0;
                }
            </style>
            ${label ? `<div class="label">${label}</div>` : ''}
            <div class="text ${isValue ? 'value' : ''}">${text}</div>
        `;
    }
}

class FieldModal extends HTMLElement {
    constructor() {
        super();
        const shadowRoot = this.attachShadow({mode: 'open'});
        shadowRoot.innerHTML = `
            <style>
                /* full page dim with the dialog on top of it */
                :host { position: fixed; inset: 0; z-index: 10; background: rgba(0,0,0,.5); display: block; }
                .dialog {
                    position: absolute;
                    left: 738px;
                    bottom: 21px;
                    width: 444px;
                    height: 748px;
                    display: flex;
                    flex-direction: column;
                    background: #fff;
                    border-radius: 0 0 6px 6px;
                    box-shadow: 0 6px 24px rgba(0,0,0,.45);
                }
                .body { flex: 1; min-height: 0; overflow: hidden; padding: 0 32px 0 24px; position: relative; }
                .stack { display: flex; flex-direction: column; gap: 24px; margin-top: -12px; }
                ::slotted(form-field[area]) { --field-height: 99px; border-color: #111; }
                .bar { position: absolute; right: 3px; top: 504px; width: 3px; height: 66px; background: #c8c8c8; border-radius: 2px; }
                .foot { display: flex; justify-content: flex-end; align-items: center; height: 55px; flex: none; padding: 0 4px 16px 0; box-sizing: border-box; gap: 22px; }
                .cancel { color: #6c70f5; font-size: 14px; font-weight: 400; }
                .save { display: flex; align-items: center; justify-content: center; width: 64px; height: 35px; background: #6c70f5; color: #fff; border-radius: 4px; font-size: 13.5px; font-weight: 600; }
            </style>
            <div class="dialog">
                <div class="body">
                    <div class="stack"><slot></slot></div>
                    <div class="bar"></div>
                </div>
                <div class="foot"><span class="cancel">Cancel</span><span class="save">Save</span></div>
            </div>
        `;
    }
}

class RedBox extends HTMLElement {
    constructor() {
        super();
        const shadowRoot = this.attachShadow({mode: 'open'});
        shadowRoot.innerHTML = `
            <style>
                :host { position: fixed; z-index: 20; left: 724px; top: 451px; width: 468px; height: 196px; box-sizing: border-box; border: 5px solid #f00; display: block; }
            </style>
        `;
    }
}

class CallOut extends HTMLElement {
    constructor() {
        super();
        const shadowRoot = this.attachShadow({mode: 'open'});
        shadowRoot.innerHTML = `
            <style>
                :host {
                    position: fixed;
                    z-index: 30;
                    left: calc(var(--x) - 22px);
                    top: calc(var(--y) - 22px);
                    width: 44px;
                    height: 44px;
                    border-radius: 50%;
                    background: #f00;
                    color: #fff;
                    font: 29px "Liberation Sans", Arial, sans-serif;
                    display: flex;
                    align-items: center;
                    justify-content: center;
                }
            </style>
            ${this.getAttribute('n')}
        `;
    }
}

customElements.define('app-icon', AppIcon);
customElements.define('gears-icon', GearsIcon);
customElements.define('app-shell', AppShell);
customElements.define('side-nav', SideNav);
customElements.define('nav-item', NavItem);
customElements.define('chat-list', ChatList);
customElements.define('chat-row', ChatRow);
customElements.define('chat-thread', ChatThread);
customElements.define('otp-card', OtpCard);
customElements.define('contact-panel', ContactPanel);
customElements.define('form-field', FormField);
customElements.define('field-modal', FieldModal);
customElements.define('red-box', RedBox);
customElements.define('call-out', CallOut);
</script>
</body>
</html>
